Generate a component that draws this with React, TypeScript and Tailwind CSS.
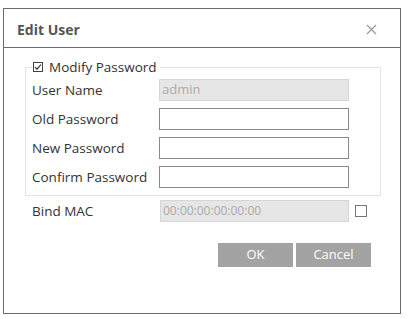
import React from "react";

function Check() {
  return (
    <span className="w-[10px] h-[10px] border border-[#444] bg-white flex items-center justify-center">
      <svg width="8" height="8" viewBox="0 0 8 8">
        <path d="M1 4.2 L3 6.2 L7 1.5" fill="none" stroke="#222" strokeWidth="1.1" />
      </svg>
    </span>
  );
}

function Row({ label, value, disabled }: { label: string; value?: string; disabled?: boolean }) {
  return (
    <div className="flex items-center h-[22px]">
      <div className="w-[127px] text-[13.5px] text-[#333]">{label}</div>
      <div
        className={
          "w-[190px] h-[22px] flex items-center px-[2px] text-[13px] " +
          (disabled
            ? "bg-[#e6e6e6] border border-[#d6d6d6] text-[#ababab]"
            : "bg-white border border-[#8a8a8a]")
        }
      >
        {value}
      </div>
    </div>
  );
}

export default function App() {
  return (
    <div className="w-[411px] h-[319px] bg-white pt-[8px] pl-[3px] font-['Open_Sans',sans-serif]">
      <div className="w-[398px] h-[306px] border border-[#6b6b6b] flex flex-col">
        <div className="h-[39px] shrink-0 border-b border-[#6b6b6b] flex items-center justify-between pl-[13px] pr-[23px] pt-[2px]">
          <span className="text-[14px] font-bold text-[#555]">Edit User</span>
          <svg width="11" height="11" viewBox="0 0 11 11">
            <path d="M1 1 L10 10 M10 1 L1 10" stroke="#9a9a9a" strokeWidth="1.3" />
          </svg>
        </div>
        <div className="pl-[21px] pt-[10px]">
          <fieldset className="w-[356px] border border-[#e3e3e3] px-[6px] pb-[7px]">
            <legend className="flex items-center gap-[6px] pl-[1px] pr-[3px] h-[18px]">
              <Check />
              <span className="text-[13.5px] text-[#333]">Modify Password</span>
            </legend>
            <div className="flex flex-col gap-[7px] mt-[3px]">
              <Row label="User Name" value="admin" disabled />
              <Row label="Old Password" />
              <Row label="New Password" />
              <Row label="Confirm Password" />
            </div>
          </fieldset>
          <div className="flex items-center h-[22px] mt-[4px] pl-[7px]">
            <div className="w-[128px] text-[13.5px] text-[#333]">Bind MAC</div>
            <div className="w-[189px] h-[22px] flex items-center px-[2px] text-[12px] bg-[#e6e6e6] border border-[#d6d6d6] text-[#ababab]">
              00:00:00:00:00:00
            </div>
            <div className="ml-[6px] w-[12px] h-[12px] border border-[#777] bg-white" />
          </div>
          <div className="flex justify-end gap-[3px] mt-[21px] pr-[29px]">
            <div className="w-[75px] h-[24px] bg-[#a3a3a3] text-white text-[13px] flex items-center justify-center">OK</div>
            <div className="w-[75px] h-[24px] bg-[#a3a3a3] text-white text-[13px] flex items-center justify-center">Cancel</div>
          </div>
        </div>
      </div>
    </div>
  );
}
